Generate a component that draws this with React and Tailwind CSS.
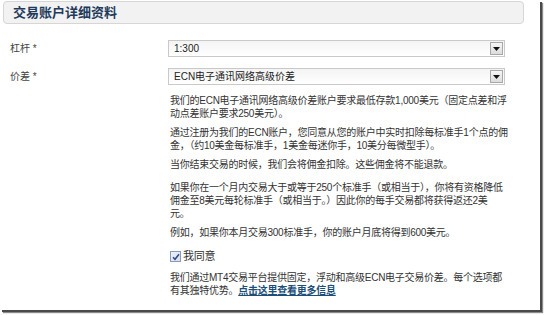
import React from "react";

function Select({ value }) {
  return (
    <div className="w-[337px] h-[17px] border border-[#c9c9c9] bg-gradient-to-b from-[#f4f4f4] to-white flex items-center justify-between pl-[5px] pr-[1px]">
      <span className="text-[10px] text-[#222] leading-none">{value}</span>
      <div className="w-[13px] h-[13px] border border-[#a8a8a8] bg-gradient-to-b from-[#f6f6f6] to-[#dcdcdc] flex items-center justify-center">
        <svg width="7" height="4" viewBox="0 0 7 4">
          <path d="M0 0 L7 0 L3.5 4 Z" fill="#111" />
        </svg>
      </div>
    </div>
  );
}

export default function App() {
  return (
    <div
      className="w-[545px] h-[315px] bg-white"
      style={{ fontFamily: '"Liberation Sans", "Noto Sans CJK SC", sans-serif' }}
    >
      <div className="w-[540px] h-[310px] bg-white shadow-[2px_2px_0_#4a4a4a,3px_3px_1px_#8a8a8a] pt-[1px]">
        <div className="ml-[3px] w-[521px] h-[23px] rounded-[4px] border border-[#d6d6d6] bg-[#f2f2f2] flex items-center pl-[9px]">
          <span className="text-[13px] font-bold text-[#1f3b5c] leading-none">交易账户详细资料</span>
        </div>

        <div className="mt-[16px] flex items-center">
          <div className="w-[168px] pl-[10px] text-[10px] text-[#444] leading-none">杠杆 *</div>
          <Select value="1:300" />
        </div>
        <div className="mt-[11px] flex items-center">
          <div className="w-[168px] pl-[10px] text-[10px] text-[#444] leading-none">价差 *</div>
          <Select value="ECN电子通讯网络高级价差" />
        </div>

        <div className="ml-[170px] mt-[9px] text-[10px] tracking-[-0.25px] leading-[13px] text-[#333] whitespace-nowrap">
          <p>
            我们的ECN电子通讯网络高级价差账户要求最低存款1,000美元（固定点差和浮
            <br />
            动点差账户要求250美元）。
          </p>
          <p className="mt-[6px]">
            通过注册为我们的ECN账户，您同意从您的账户中实时扣除每标准手1个点的佣
            <br />
            金，（约10美金每标准手，1美金每迷你手，10美分每微型手）。
          </p>
          <p className="mt-[6px]">当你结束交易的时候，我们会将佣金扣除。这些佣金将不能退款。</p>
          <p className="mt-[10px]">
            如果你在一个月内交易大于或等于250个标准手（或相当于），你将有资格降低
            <br />
            佣金至8美元每轮标准手（或相当于。）因此你的每手交易都将获得返还2美
            <br />
            元。
          </p>
          <p className="mt-[6px]">例如，如果你本月交易300标准手，你的账户月底将得到600美元。</p>
          <div className="mt-[11px] h-[13px] flex items-center gap-[2px]">
            <div className="w-[11px] h-[11px] border border-[#8a9bb8] bg-gradient-to-br from-[#eef2f8] to-[#d6deea] flex items-center justify-center">
              <svg width="8" height="8" viewBox="0 0 8 8">
                <path d="M1 4.2 L3 6.3 L7 1.2" stroke="#2b4a8a" strokeWidth="1.5" fill="none" />
              </svg>
            </div>
            <span className="text-[11px]">我同意</span>
          </div>
          <p className="mt-[8px]">
            我们通过MT4交易平台提供固定，浮动和高级ECN电子交易价差。每个选项都
            <br />
            有其独特优势。
            <a className="font-bold underline text-[#1b4f78]">点击这里查看更多信息</a>
          </p>
        </div>
      </div>
    </div>
  );
}
